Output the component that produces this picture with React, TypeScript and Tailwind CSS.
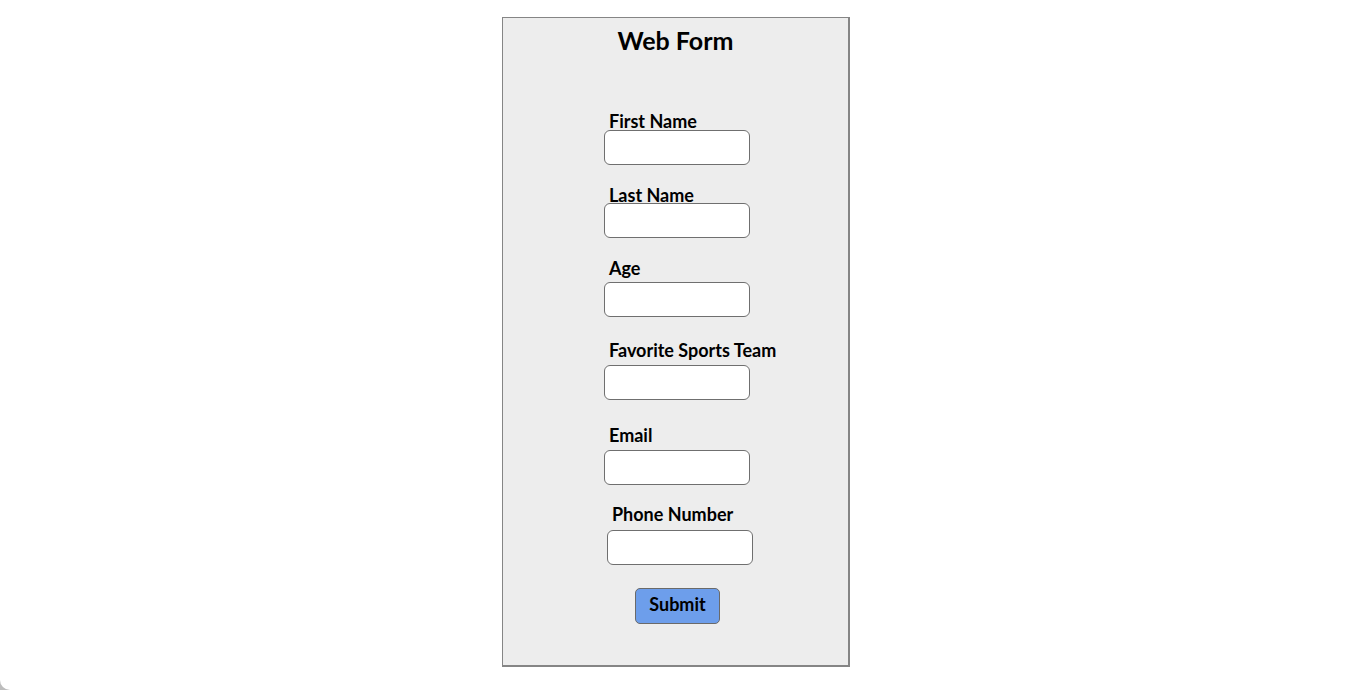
type Field = { label: string; labelGap: string; inputGap: string; shift?: boolean }

const fields: Field[] = [
  { label: 'First Name', labelGap: 'mt-[57px]', inputGap: 'mt-0' },
  { label: 'Last Name', labelGap: 'mt-[21px]', inputGap: '-mt-[1px]' },
  { label: 'Age', labelGap: 'mt-[21px]', inputGap: 'mt-[5px]' },
  { label: 'Favorite Sports Team', labelGap: 'mt-[24px]', inputGap: 'mt-[6px]' },
  { label: 'Email', labelGap: 'mt-[26px]', inputGap: 'mt-[6px]' },
  { label: 'Phone Number', labelGap: 'mt-[20px]', inputGap: 'mt-[7px]', shift: true },
]

export default function App() {
  return (
    <div className="h-[690px] w-[1370px] overflow-hidden bg-[#bdbdbd]">
      <div
        className="h-full w-full rounded-bl-[10px] bg-white pt-[17px] text-black"
        style={{ fontFamily: 'Lato, "Open Sans", sans-serif' }}
      >
        <div className="ml-[502px] flex h-[650px] w-[348px] flex-col border border-r-2 border-b-2 border-[#858585] bg-[#ededed]">
          <h1 className="mt-[7px] text-center text-[25px] font-bold leading-[30px]">Web Form</h1>

          <form className="flex flex-col" onSubmit={(e) => e.preventDefault()}>
            {fields.map((f) => (
              <div key={f.label} className={`flex flex-col ${f.labelGap} ${f.shift ? 'pl-[104px]' : 'pl-[101px]'}`}>
                <label className="pl-[5px] text-[18px] font-bold leading-[18px]">{f.label}</label>
                <input
                  type="text"
                  className={`${f.inputGap} h-[35px] w-[146px] rounded-[6px] border-[1.5px] border-[#6f6f6f] bg-white outline-none`}
                />
              </div>
            ))}

            <div className="mt-[23px] flex pl-[132px]">
              <button
                type="submit"
                className="h-[36px] w-[85px] rounded-[5px] border-[1.5px] border-[#6a6a6a] bg-[#6d9eeb] pb-[4px] text-[18px] font-bold leading-none"
              >
                Submit
              </button>
            </div>
          </form>
        </div>
      </div>
    </div>
  )
}
